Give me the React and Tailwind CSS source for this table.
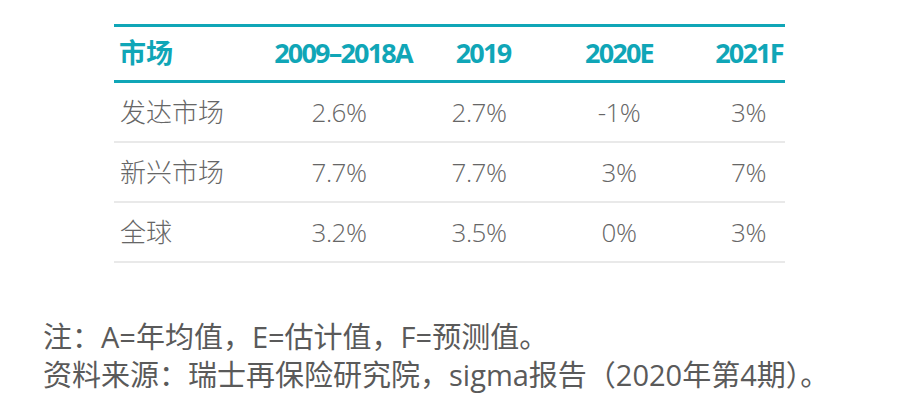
import React from "react";

const rows = [
  { label: "发达市场", values: ["2.6%", "2.7%", "-1%", "3%"] },
  { label: "新兴市场", values: ["7.7%", "7.7%", "3%", "7%"] },
  { label: "全球", values: ["3.2%", "3.5%", "0%", "3%"] },
];

const headers = ["2009–2018A", "2019", "2020E", "2021F"];

const font = { fontFamily: "'Open Sans', 'Noto Sans CJK SC', sans-serif" };

const App = () => {
  return (
    <div className="w-[906px] h-[418px] bg-white overflow-hidden" style={font}>
      <div className="ml-[114px] mt-[24px] w-[671px]">
        {/* header row */}
        <div className="grid grid-cols-[154px_150px_130px_142px_95px] h-[59px] items-center border-y-[3px] border-[#10a6b7] text-[#10a6b7] text-[27px] font-bold">
          <div className="pl-[5px]">市场</div>
          {headers.map((h, i) => (
            <div
              key={h}
              className={`text-center tracking-[-1.8px] ${i === 3 ? "pl-[23px]" : ""}`}
            >
              {h}
            </div>
          ))}
        </div>

        {/* body rows */}
        {rows.map((row) => (
          <div
            key={row.label}
            className="grid grid-cols-[154px_150px_130px_142px_95px] h-[60px] items-center border-b-2 border-[#e9e9e9] text-[#666666] text-[26px] font-light"
          >
            <div className="pl-[6px]">{row.label}</div>
            {row.values.map((v, i) => (
              <div
                key={i}
                className={`text-center tracking-[-0.5px] ${i === 3 ? "pl-[22px]" : ""} ${i < 2 ? "pr-[8px]" : ""}`}
              >
                {v}
              </div>
            ))}
          </div>
        ))}
      </div>

      {/* notes */}
      <div className="ml-[43px] mt-[55px] text-[29px] leading-[38px] text-[#5a5a5a]">
        <p>注：A=年均值，E=估计值，F=预测值。</p>
        <p>资料来源：瑞士再保险研究院，sigma报告（2020年第4期）。</p>
      </div>
    </div>
  );
};

export default App;
